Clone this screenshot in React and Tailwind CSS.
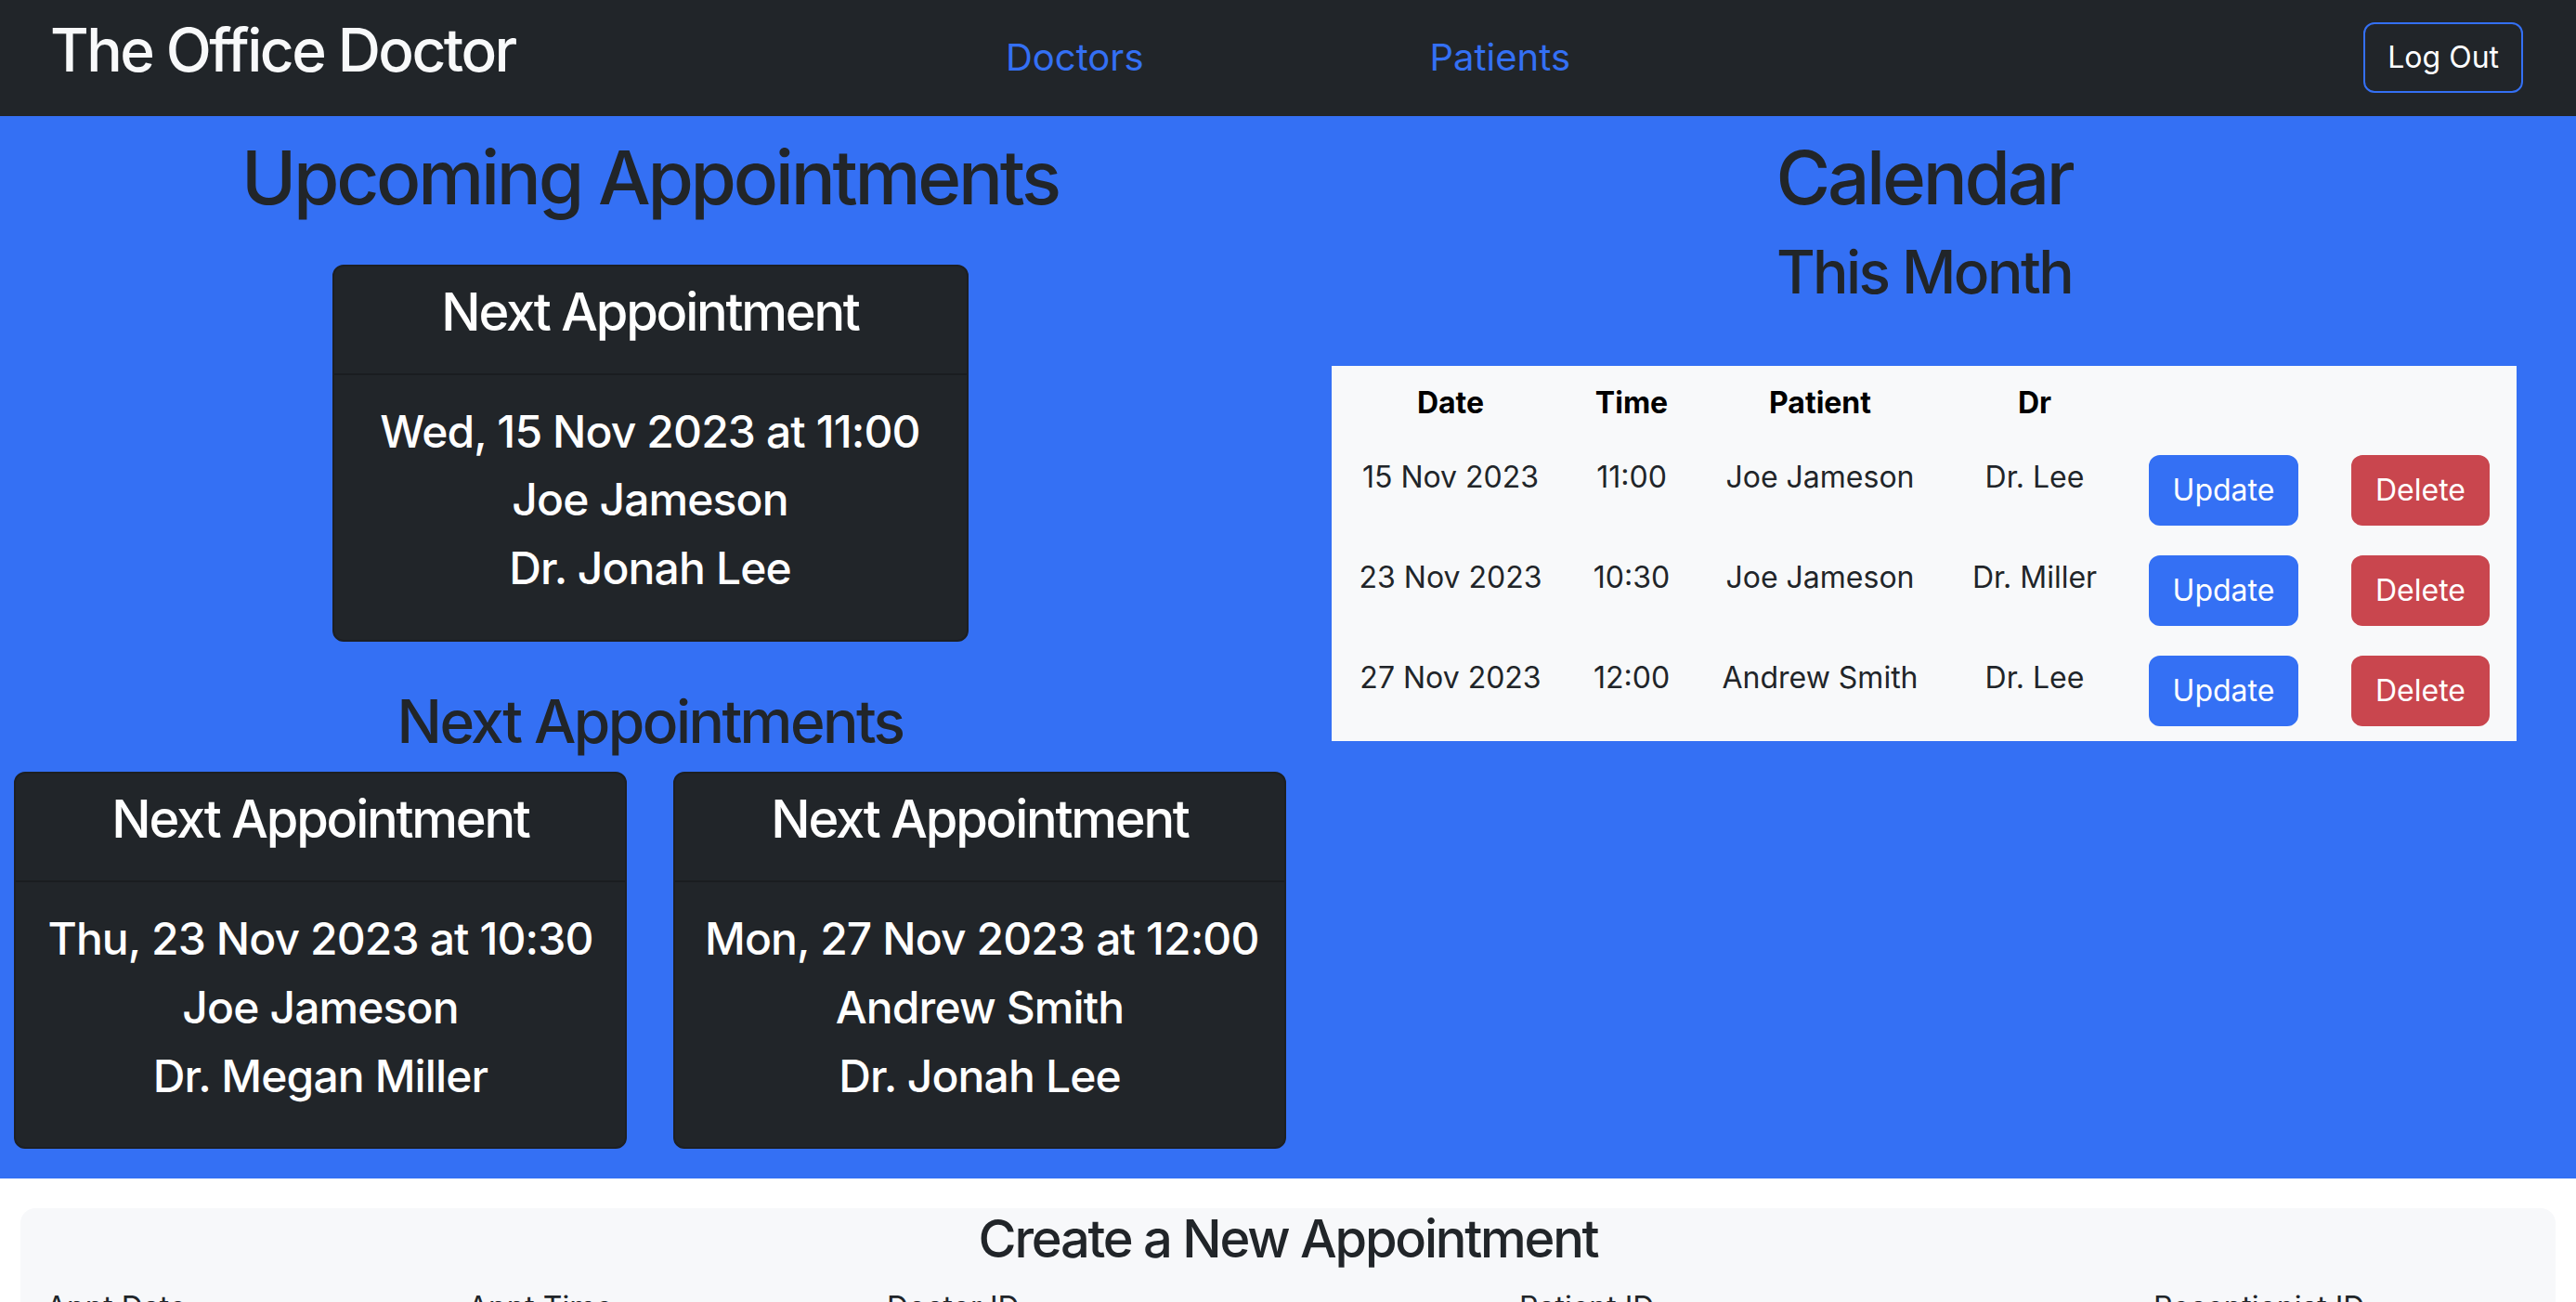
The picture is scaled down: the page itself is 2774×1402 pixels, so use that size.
import React from "react";

const upcoming = [
  { when: "Thu, 23 Nov 2023 at 10:30", patient: "Joe Jameson", doctor: "Dr. Megan Miller" },
  { when: "Mon, 27 Nov 2023 at 12:00", patient: "Andrew Smith", doctor: "Dr. Jonah Lee" },
];

const calendar = [
  { date: "15 Nov 2023", time: "11:00", patient: "Joe Jameson", dr: "Dr. Lee" },
  { date: "23 Nov 2023", time: "10:30", patient: "Joe Jameson", dr: "Dr. Miller" },
  { date: "27 Nov 2023", time: "12:00", patient: "Andrew Smith", dr: "Dr. Lee" },
];

const AppointmentCard = ({ when, patient, doctor, className = "" }) => (
  <div
    className={`rounded-[12px] border-2 border-[#1c1f23] bg-[#212529] text-white text-center ${className}`}
  >
    <div className="border-b-2 border-[#1a1d20] px-[32px] pt-[16px] pb-[16px]">
      <h3 className="text-[56px] leading-[67px] font-medium mb-[16px] tracking-[-0.04em]">Next Appointment</h3>
    </div>
    <div className="p-[32px] tracking-[-0.055em]">
      <h4 className="text-[48px] leading-[57.6px] font-medium mb-[16px] whitespace-nowrap">{when}</h4>
      <h4 className="text-[48px] leading-[57.6px] font-medium mb-[16px]">{patient}</h4>
      <h4 className="text-[48px] leading-[57.6px] font-medium mb-[16px]">{doctor}</h4>
    </div>
  </div>
);

export default function App() {
  return (
    <div className="min-h-screen bg-white font-['Inter','Noto_Sans',sans-serif] text-[#212529]">
      {/* Navbar */}
      <nav className="flex items-center bg-[#212529] px-[57px] py-[16px]">
        <div className="flex-1 basis-0">
          <h2 className="-ml-[3px] text-[64px] leading-[76.8px] font-medium text-[#f8f9fa] mb-[16px] tracking-[-0.04em]">
            The Office Doctor
          </h2>
        </div>
        <div className="flex items-center gap-[308px] text-[40px] leading-[60px] text-[#3470f4]">
          <a href="#">Doctors</a>
          <a href="#">Patients</a>
        </div>
        <div className="flex flex-1 basis-0 justify-end">
          <button className="rounded-[12px] border-2 border-[#3470f4] px-[24px] py-[12px] text-[32px] leading-[48px] text-white">
            Log Out
          </button>
        </div>
      </nav>

      {/* Main blue area */}
      <div className="flex bg-[#3470f4]">
        <section className="flex w-[1400px] flex-col items-center pt-[18px] pb-[32px]">
          <h1 className="text-[80px] leading-[96px] font-medium mb-[46px] tracking-[-0.041em]">
            Upcoming Appointments
          </h1>
          <AppointmentCard
            className="w-[685px]"
            when="Wed, 15 Nov 2023 at 11:00"
            patient="Joe Jameson"
            doctor="Dr. Jonah Lee"
          />
          <h2 className="mt-[48px] mb-[16px] text-[64px] leading-[76.8px] font-medium tracking-[-0.04em]">
            Next Appointments
          </h2>
          <div className="flex gap-[50px] px-[15px]">
            {upcoming.map((a) => (
              <AppointmentCard key={a.when} className="w-[660px]" {...a} />
            ))}
          </div>
        </section>

        <section className="flex flex-1 flex-col items-center pt-[18px] pr-[30px]">
          <h1 className="text-[80px] leading-[96px] font-medium mb-[16px] tracking-[-0.041em]">Calendar</h1>
          <h2 className="text-[64px] leading-[76.8px] font-medium mb-[62px] tracking-[-0.04em]">This Month</h2>
          <table className="w-[1276px] table-fixed bg-[#f8f9fa] text-[32px] leading-[48px] text-[#212529]">
            <colgroup>
              <col className="w-[256px]" />
              <col className="w-[134px]" />
              <col className="w-[272px]" />
              <col className="w-[190px]" />
              <col className="w-[217px]" />
              <col className="w-[207px]" />
            </colgroup>
            <thead>
              <tr className="font-bold text-black">
                <th className="p-[16px]">Date</th>
                <th className="p-[16px]">Time</th>
                <th className="p-[16px]">Patient</th>
                <th className="p-[16px]">Dr</th>
                <th className="p-[16px]"></th>
                <th className="p-[16px]"></th>
              </tr>
            </thead>
            <tbody>
              {calendar.map((r) => (
                <tr key={r.date} className="text-center align-top">
                  <td className="p-[16px]">{r.date}</td>
                  <td className="p-[16px]">{r.time}</td>
                  <td className="p-[16px]">{r.patient}</td>
                  <td className="p-[16px]">{r.dr}</td>
                  <td className="p-[16px]">
                    <button className="rounded-[12px] border-2 border-[#3470f4] bg-[#3470f4] px-[24px] py-[12px] text-white">
                      Update
                    </button>
                  </td>
                  <td className="p-[16px]">
                    <button className="rounded-[12px] border-2 border-[#c9464e] bg-[#c9464e] px-[24px] py-[12px] text-white">
                      Delete
                    </button>
                  </td>
                </tr>
              ))}
            </tbody>
          </table>
        </section>
      </div>

      {/* New appointment form */}
      <div className="px-[22px] pt-[32px] pb-[32px]">
        <div className="rounded-[16px] bg-[#f7f8fa] pb-[32px]">
          <h3 className="text-center text-[56px] leading-[67px] font-medium mb-[16px] tracking-[-0.04em]">
            Create a New Appointment
          </h3>
          <form className="grid grid-cols-[454px_451px_681px_683px_1fr] pl-[28px] text-[32px] leading-[48px]">
            {["Appt Date", "Appt Time", "Doctor ID", "Patient ID", "Receptionist ID"].map((label) => (
              <div key={label} className="flex flex-col gap-[8px] pr-[24px]">
                <label>{label}</label>
                <input className="rounded-[12px] border-2 border-[#dee2e6] bg-white px-[24px] py-[12px]" />
              </div>
            ))}
          </form>
        </div>
      </div>
    </div>
  );
}
